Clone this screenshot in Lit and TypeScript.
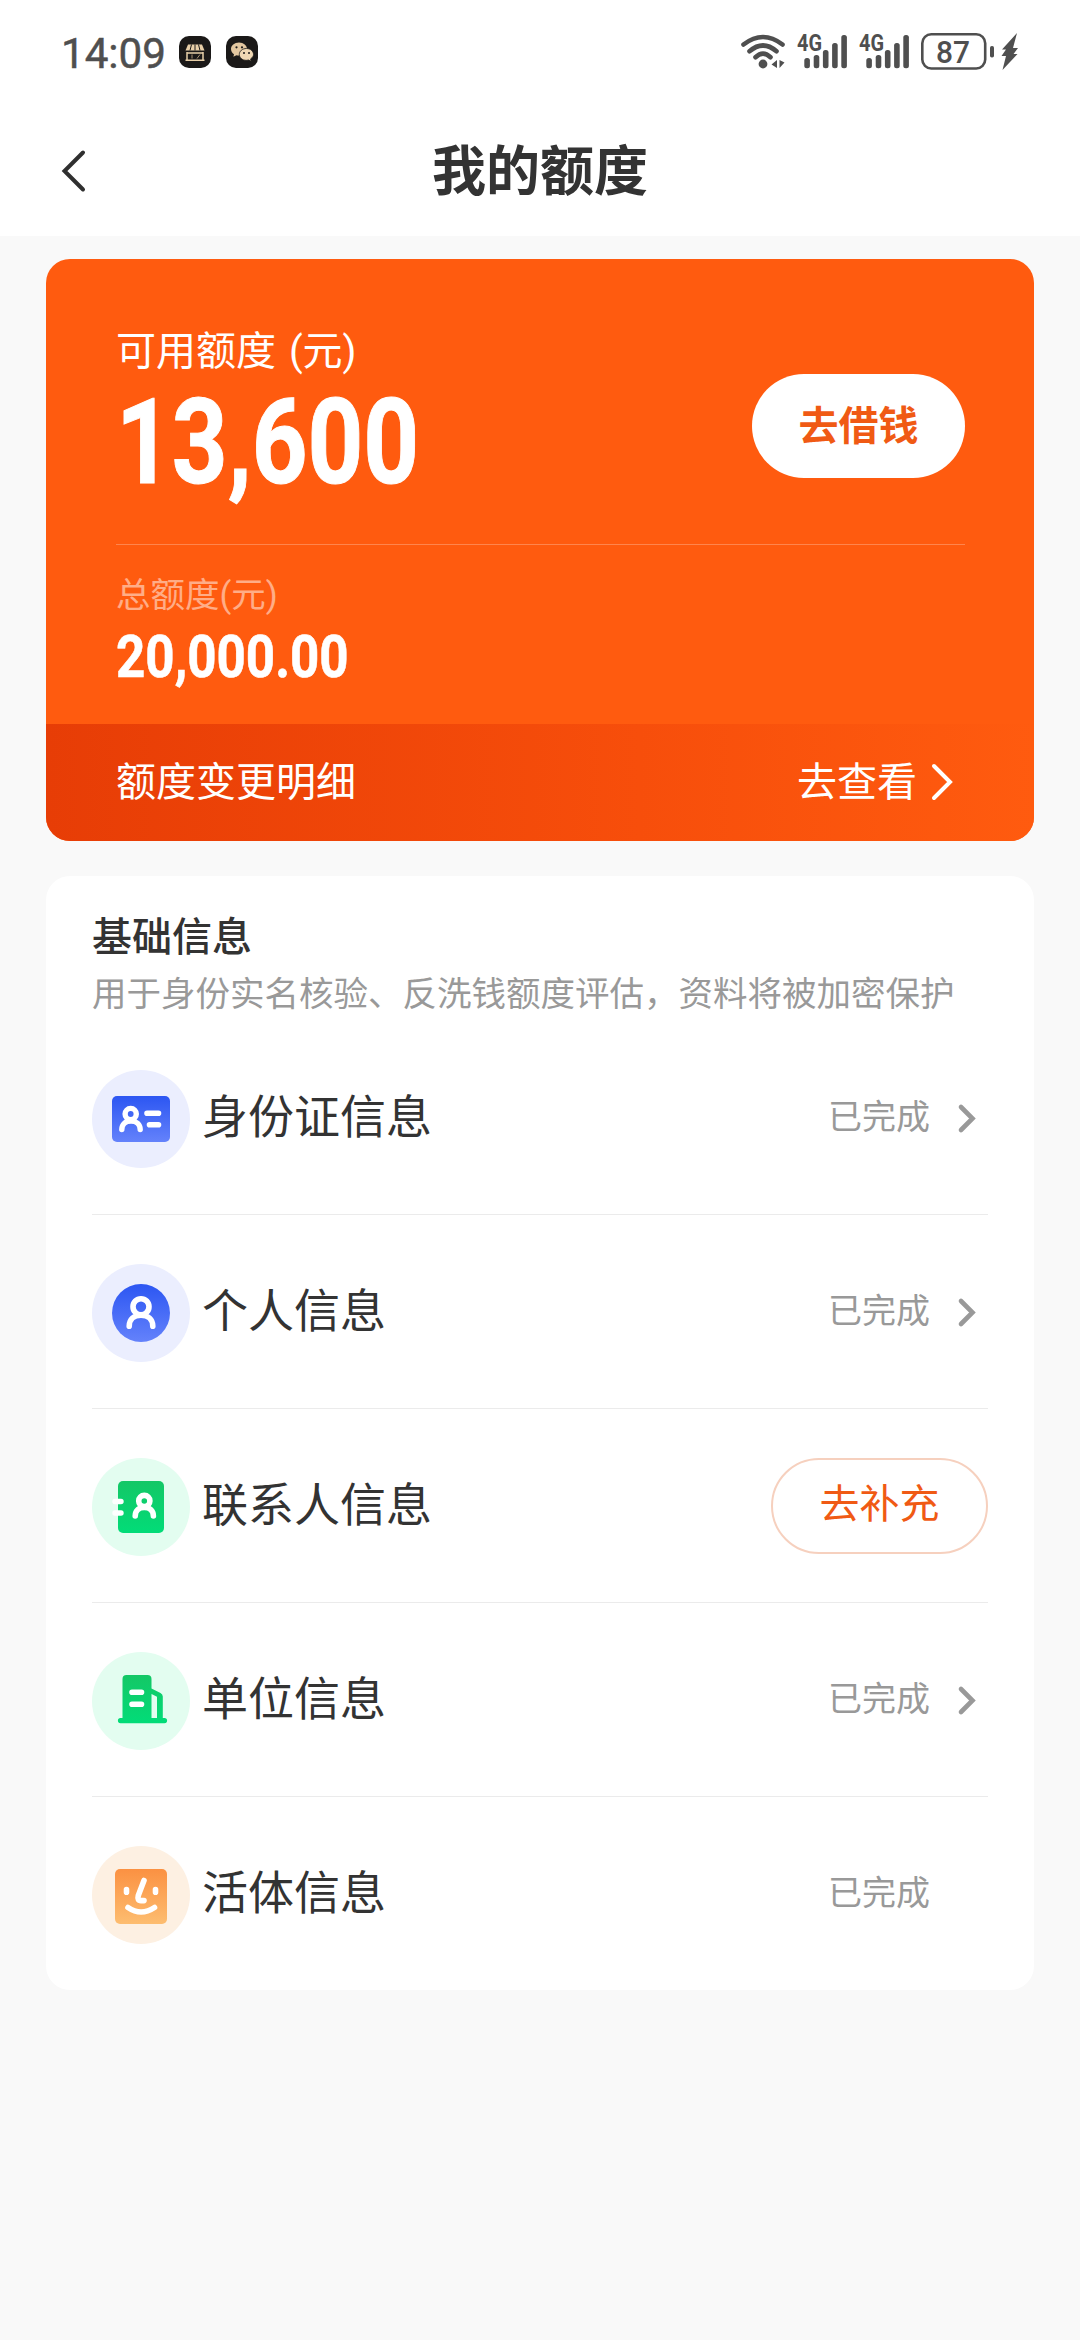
import { LitElement, html, css, svg } from "lit";
import { customElement, property } from "lit/decorators.js";

type Item = { icon: string; label: string; action?: string; arrow?: boolean };

const ITEMS: Item[] = [
  { icon: "id", label: "身份证信息", arrow: true },
  { icon: "person", label: "个人信息", arrow: true },
  { icon: "contact", label: "联系人信息", action: "去补充" },
  { icon: "company", label: "单位信息", arrow: true },
  { icon: "face", label: "活体信息" },
];

const ICONS: Record<string, unknown> = {
  id: svg`
    <defs><linearGradient id="g" x1="0" y1="0" x2="0" y2="1"><stop offset="0" stop-color="#2c56f2"/><stop offset="1" stop-color="#6482fb"/></linearGradient></defs>
    <circle cx="49" cy="49" r="49" fill="#ebeefe"/>
    <rect x="20" y="26" width="58" height="46" rx="5" fill="url(#g)"/>
    <g fill="none" stroke="#fff" stroke-linecap="round" stroke-width="5.400">
      <circle cx="38.700" cy="44" r="5.600"/>
      <path d="M29.800 59.500c0-5.500 4-8.500 9.200-8.500s9.200 3 9.200 8.500"/>
      <path d="M55 43.200h11.500M57.500 54.800h9" stroke-width="5.600"/>
    </g>`,
  person: svg`
    <defs><linearGradient id="g" x1="0" y1="0" x2="0" y2="1"><stop offset="0" stop-color="#2c56f2"/><stop offset="1" stop-color="#6482fb"/></linearGradient></defs>
    <circle cx="49" cy="49" r="49" fill="#ebeefe"/>
    <circle cx="49" cy="49" r="29" fill="url(#g)"/>
    <g fill="none" stroke="#fff" stroke-linecap="round" stroke-width="5.600">
      <circle cx="49" cy="42.700" r="8"/>
      <path d="M37.200 62.200c0-7 5-11 11.800-11s11.800 4 11.800 11"/>
    </g>`,
  contact: svg`
    <defs><linearGradient id="g" x1="0" y1="0" x2="0" y2="1"><stop offset="0" stop-color="#14c766"/><stop offset="1" stop-color="#02dc78"/></linearGradient></defs>
    <circle cx="49" cy="49" r="49" fill="#e3fdf0"/>
    <rect x="26" y="23" width="46" height="52" rx="5" fill="url(#g)"/>
    <g fill="none" stroke="#fff" stroke-linecap="round" stroke-width="5.600">
      <circle cx="52.300" cy="43" r="5.600"/>
      <path d="M43.200 58c0-5.500 4-8.500 9.100-8.500s9.100 3 9.100 8.500"/>
      <path d="M23 43.500h6M23 55h6" stroke-width="5.400"/>
    </g>`,
  company: svg`
    <defs><linearGradient id="g" x1="0" y1="0" x2="0" y2="1"><stop offset="0" stop-color="#14c766"/><stop offset="1" stop-color="#02dc78"/></linearGradient></defs>
    <circle cx="49" cy="49" r="49" fill="#e3fdf0"/>
    <path fill="url(#g)" d="M34.500 23h21a4 4 0 0 1 4 4v9.500l9 4.500a4 4 0 0 1 2.300 3.500V66h1.700a2.600 2.600 0 0 1 0 5.200h-44a2.600 2.600 0 0 1 0-5.200h2V27a4 4 0 0 1 4-4z"/>
    <path d="M59.500 42l5.500 2.800V66h-5.500z" fill="#e3fdf0"/>
    <path d="M40 40.200h9.500M40 52.200h9.500" fill="none" stroke="#fff" stroke-width="5.600" stroke-linecap="round"/>`,
  face: svg`
    <defs><linearGradient id="g" x1="0" y1="0" x2="0" y2="1"><stop offset="0" stop-color="#fb9142"/><stop offset="1" stop-color="#fdbd70"/></linearGradient></defs>
    <circle cx="49" cy="49" r="49" fill="#fdf0e2"/>
    <rect x="23" y="23" width="52" height="55" rx="5" fill="url(#g)"/>
    <g fill="none" stroke="#fff" stroke-linecap="round" stroke-linejoin="round" stroke-width="5.600">
      <path d="M34.500 43.500v2.800M63.500 43.500v2.800M52 34.500L46.300 49.500Q45 54.600 49 54.600H52"/>
      <path d="M36 61.500Q49 70.500 62.500 61.500"/>
    </g>`,
};

@customElement("info-row")
class InfoRow extends LitElement {
  @property({ attribute: false }) item!: Item;

  static styles = css`
    :host { display: block; height: 194px; box-sizing: border-box; border-bottom: 1px solid #ebebeb; }
    :host(:last-of-type) { border-bottom-color: transparent; }
    .row { height: 98px; padding-top: 49px; display: flex; align-items: center; }
    .icon { width: 98px; height: 98px; flex: none; }
    .label { margin-left: 12px; flex: 1; font-size: 46px; line-height: 64px; color: #333; padding-bottom: 5px; }
    .status { font-size: 34px; line-height: 48px; color: #999; padding-bottom: 5px; margin-right: 24px; }
    .arrow { width: 24px; height: 32px; margin: 0 10px 3px 0; }
    .gap { width: 34px; }
    .btn { width: 217px; height: 96px; box-sizing: border-box; border: 2px solid #f6d0be; border-radius: 48px; margin-bottom: 2px;
      background: none; color: #f05a14; font: inherit; font-size: 40px; line-height: 56px; padding: 0 0 2px; }
  `;

  render() {
    const { icon, label, action, arrow } = this.item;
    return html`<div class="row">
      <svg class="icon" viewBox="0 0 98 98">${ICONS[icon]}</svg>
      <span class="label">${label}</span>
      ${action
        ? html`<button class="btn">${action}</button>`
        : html`<span class="status">已完成</span>
            ${arrow
              ? html`<svg class="arrow" viewBox="0 0 24 32" fill="none" stroke="#999" stroke-width="4.600" stroke-linecap="round"><path d="M7 5l11.500 11.500L7 28"/></svg>`
              : html`<span class="gap"></span>`}`}
    </div>`;
  }
}

@customElement("app-root")
class AppRoot extends LitElement {
  static styles = css`
    :host { display: block; min-height: 2340px; background: #f9f9f9; color: #333;
      font-family: Roboto, "Noto Sans CJK SC", sans-serif; }
    .top { height: 236px; background: #fff; }
    .statusbar { height: 104px; display: flex; align-items: center; padding: 0 60px 0 61px; box-sizing: border-box; color: #4f4f4f; }
    .time { font-size: 43px; line-height: 50px; width: 118px; padding-top: 2px; white-space: nowrap; }
    .time span { display: inline-block; transform: scaleX(.98); transform-origin: left; -webkit-text-stroke: .5px #4f4f4f; }
    .app { width: 32px; height: 32px; margin-right: 15px; }
    .right { margin-left: auto; width: 282px; height: 44px; }
    .nav { height: 132px; display: grid; grid-template-columns: 200px 1fr 200px; align-items: center; }
    .back { width: 32px; height: 48px; margin-left: 58px; margin-top: 1px; }
    .title { text-align: center; font-size: 54px; font-weight: 700; line-height: 76px; padding-top: 6px; }
    .content { padding: 23px 46px 0; }
    .quota { height: 582px; border-radius: 24px; overflow: hidden; background: #ff5b0f; color: #fff; display: flex; flex-direction: column; }
    .main { margin: 0 69px 0 70px; height: 286px; box-sizing: border-box; padding-top: 65px;
      border-bottom: 1px solid rgba(255, 255, 255, .26); display: flex; justify-content: space-between; }
    .cap { font-size: 40px; line-height: 56px; white-space: pre; word-spacing: 3px; }
    .num { display: block; width: max-content; font-weight: 700; transform-origin: left; }
    .big { font-size: 118px; line-height: 120px; margin-top: 3px; transform: scaleX(.825); -webkit-text-stroke: 1px #fff; }
    .borrow { margin-top: 50px; width: 213px; height: 104px; border: 0; border-radius: 52px; background: #fff; color: #f05a14;
      font: inherit; font-size: 40px; font-weight: 700; padding: 0 0 6px; }
    .total { padding: 25px 70px 0; flex: 1; }
    .sub { font-size: 34.500px; line-height: 50px; color: rgba(255, 255, 255, .5); }
    .small { font-size: 59px; line-height: 64px; margin-top: 5px; transform: scaleX(.866); -webkit-text-stroke: .6px #fff; }
    .detail { height: 117px; box-sizing: border-box; display: flex; align-items: center; padding: 0 79px 0 70px; font-size: 40px;
      background: linear-gradient(90deg, #e73d06, #f74e0b 60%, #ff5b0f); }
    .detail span { padding-bottom: 7px; }
    .detail .go { margin-left: auto; }
    .chev { width: 26px; height: 42px; margin: 0 0 2px 12px; }
    .info { margin-top: 35px; height: 1114px; border-radius: 24px; background: #fff; padding: 34px 46px 0; box-sizing: border-box; }
    .h { font-size: 40px; font-weight: 500; line-height: 56px; }
    .p { font-size: 34.500px; line-height: 48px; color: #999; margin-top: 4px; white-space: nowrap; }
    .list { margin-top: 3px; }
  `;

  private bars(x: number) {
    return [[7, 58], [16.4, 55], [25.6, 50], [34.8, 43], [44, 35]].map(
      ([dx, y]) => svg`<rect x=${x + dx - 0.2} y=${y - 30} width="5.600" height=${68.3 - y} rx="2.500"/>`
    );
  }

  render() {
    return html`
      <div class="top">
        <div class="statusbar">
          <span class="time"><span>14:09</span></span>
          <svg class="app" viewBox="0 0 32 32">
            <rect width="32" height="32" rx="10" fill="#1b1918"/>
            <path d="M9 8.500h14l2.500 6h-19z" fill="#e8cfa8"/>
            <path d="M12.500 8.500l-1.500 6M16 8.500v6M19.500 8.500l1.500 6" stroke="#1b1918" stroke-width="1"/>
            <path d="M8 16v8M24 16v8M6.500 24.300h19M8 17h16" fill="none" stroke="#e8cfa8" stroke-width="1.500"/>
            <path d="M13 18.500v4M18 22.500l3-4" stroke="#a89273" stroke-width="1"/>
          </svg>
          <svg class="app" viewBox="0 0 32 32">
            <rect width="32" height="32" rx="10" fill="#1b1918"/>
            <path d="M13 6.500c-4.600 0-8 3-8 6.600 0 2.200 1.200 4 3 5.200l-.6 2.500 3-1.500c5.600 1.300 10.600-1.700 10.600-6.200 0-3.600-3.400-6.600-8-6.600z" fill="#e3c7a0"/>
            <path d="M20.500 12.500c-4.200 0-7.200 2.700-7.200 6 0 4 4.500 6.800 9.200 5.500l2.700 1.300-.6-2.400c1.800-1.200 2.900-2.700 2.900-4.400 0-3.300-3-6-7-6z" fill="#f0d8b4" stroke="#1b1918" stroke-width=".8"/>
            <g fill="#1b1918"><circle cx="10.500" cy="11.300" r="1.100"/><circle cx="16" cy="11.300" r="1.100"/><circle cx="18" cy="17" r="1"/><circle cx="23" cy="17" r="1"/></g>
          </svg>
          <svg class="right" viewBox="738 30 282 44" fill="#4f4f4f">
            <g fill="none" stroke="#4f4f4f" stroke-width="4.600" stroke-linecap="round">
              <path d="M743.500 44.500Q763 29.500 782.500 44.500M749.500 51.300Q763 39.700 776.500 51.300M755.500 57.200Q763 50.200 770.500 57.200"/>
            </g>
            <circle cx="763" cy="64" r="4.400"/>
            <path d="M771.500 64.500l5.500-4.500v8zM779.500 60v8l5-5.500z"/>
            <g font-family="Roboto, sans-serif" font-weight="700" font-size="23">
              <text x="797" y="51" textLength="25" lengthAdjust="spacingAndGlyphs">4G</text>
              <text x="859" y="51" textLength="25" lengthAdjust="spacingAndGlyphs">4G</text>
            </g>
            <g transform="translate(0 30)">${this.bars(797.5)}${this.bars(859.5)}</g>
            <rect x="922.300" y="34.300" width="62.900" height="34.200" rx="9" fill="none" stroke="#4f4f4f" stroke-width="2.600"/>
            <rect x="990" y="46" width="4" height="11.500" rx="1.800"/>
            <text x="936" y="62.600" font-family="Roboto, sans-serif" font-size="31.500" font-weight="500" textLength="34" lengthAdjust="spacingAndGlyphs">87</text>
            <path d="M1017 33L1002 49.500h4L1001.500 56h4.500L1002.500 70 1017.500 54h-4l4.500-6h-5z"/>
          </svg>
        </div>
        <div class="nav">
          <svg class="back" viewBox="58 147 32 48" fill="none" stroke="#2f2f2f" stroke-width="4" stroke-linecap="round"><path d="M83 152.500L64.500 171 83 189.500"/></svg>
          <span class="title">我的额度</span>
        </div>
      </div>
      <div class="content">
        <section class="quota">
          <div class="main">
            <div>
              <div class="cap">可用额度 (元)</div>
              <span class="num big">13,600</span>
            </div>
            <button class="borrow">去借钱</button>
          </div>
          <div class="total">
            <div class="sub">总额度(元)</div>
            <span class="num small">20,000.00</span>
          </div>
          <div class="detail">
            <span>额度变更明细</span>
            <span class="go">去查看</span>
            <svg class="chev" viewBox="0 0 26 42" fill="none" stroke="#fff" stroke-width="4" stroke-linecap="round"><path d="M5 5l16 16L5 37"/></svg>
          </div>
        </section>
        <section class="info">
          <div class="h">基础信息</div>
          <div class="p">用于身份实名核验、反洗钱额度评估，资料将被加密保护</div>
          <div class="list">${ITEMS.map((i) => html`<info-row .item=${i}></info-row>`)}</div>
        </section>
      </div>
    `;
  }
}
